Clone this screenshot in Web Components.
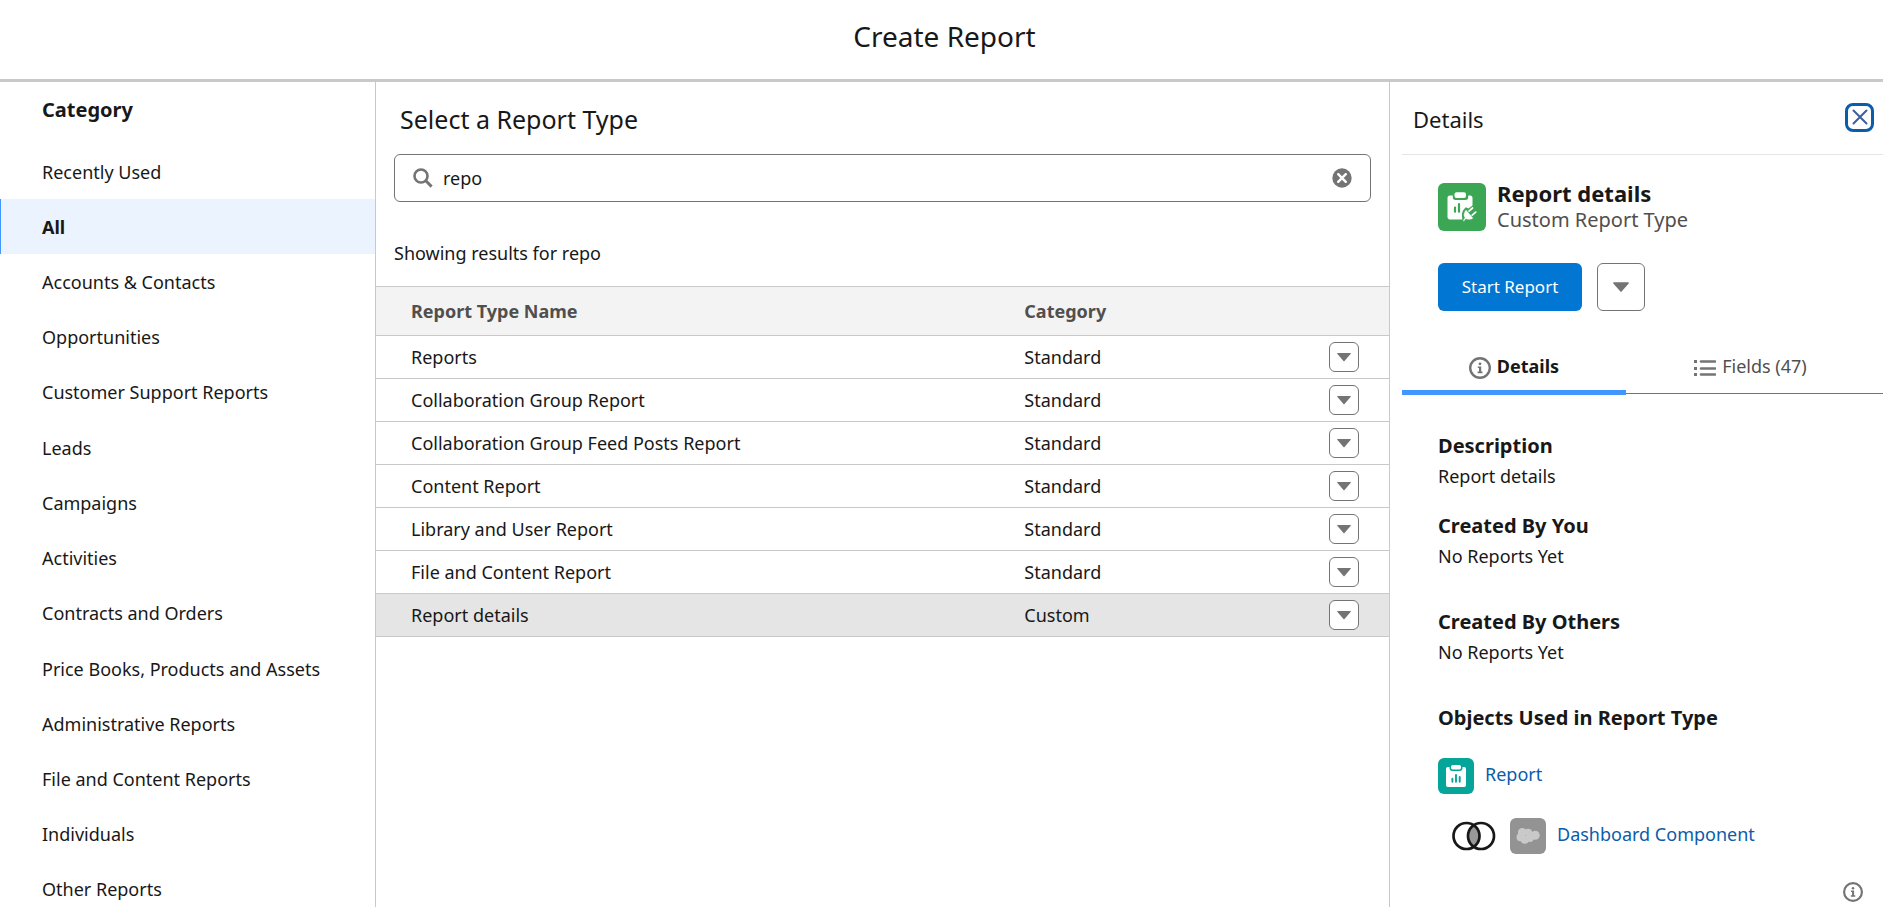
<!DOCTYPE html>
<html lang="en">
<head>
<meta charset="utf-8">
<meta name="viewport" content="width=device-width, initial-scale=1">
<title>Create Report</title>
<style>
  html, body { height: 100%; margin: 0; }
  body {
    font: 18px/26px "Noto Sans", "Open Sans", sans-serif;
    color: #181818;
    background: #fff;
  }
</style>
</head>
<body>
<report-builder>
  <builder-header slot="header">Create Report</builder-header>
  <category-nav slot="nav"></category-nav>
  <report-picker slot="main"></report-picker>
  <details-panel slot="details"></details-panel>
</report-builder>

<script>
const define = (name, html, setup) => {
  const template = document.createElement('template');
  template.innerHTML = html;
  customElements.define(name, class extends HTMLElement {
    constructor() {
      super();
      this.attachShadow({ mode: 'open' }).append(template.content.cloneNode(true));
    }
    connectedCallback() { if (setup) setup(this, this.shadowRoot); }
  });
};

/* Icons */
const ICONS = {
  search: ['0 0 20 20', '<g fill="none" stroke="currentColor"><circle cx="8" cy="8" r="6.5" stroke-width="2.6"/><path d="M12.8 12.8 18.6 18.6" stroke-width="3"/></g>'],
  clear: ['0 0 20 20', '<circle cx="10" cy="10" r="9.7" fill="currentColor"/><path d="M6.2 6.2 13.8 13.8M13.8 6.2 6.2 13.8" stroke="#fff" stroke-width="2.4" stroke-linecap="round"/>'],
  down: ['0 0 16 10', '<path d="M.8.3h14.4c.7 0 .9.7.5 1.100L8.600 9.600c-.3.4-.9.4-1.200 0L.3 1.400C-.1 1 .1.3.8.3z" fill="currentColor"/>'],
  close: ['0 0 16 16', '<path d="M1.5 1.5 14.5 14.5M14.5 1.5 1.5 14.5" stroke="currentColor" stroke-width="2" stroke-linecap="round"/>'],
  info: ['0 0 22 22', '<circle cx="11" cy="11" r="9.8" fill="none" stroke="currentColor" stroke-width="2.4"/><circle cx="11" cy="6.8" r="1.4" fill="currentColor"/><path d="M8.8 9.400h3.400v5.100h1.300v1.700H8.600v-1.700h1.400v-3.400H8.800z" fill="currentColor"/>'],
  list: ['0 0 22 18', '<path d="M0 1h3v3H0zM0 8h3v3H0zM0 14h3v3H0z" fill="currentColor"/><path d="M7 2.5H21M7 9.5H21M7 15.5H21" stroke="currentColor" stroke-width="2.6" stroke-linecap="round"/>'],
  customReport: ['0 0 48 48', '<rect width="48" height="48" rx="6" fill="#3ba755"/><path d="M12 12.5h2.8v1.8a2.7 2.7 0 0 0 2.7 2.7h10a2.7 2.7 0 0 0 2.7-2.7v-1.8H32a2.5 2.5 0 0 1 2.5 2.5v7.500l-4 3-2.700-1.200c-4 4-4.500 7-3.300 12.200H12A2.500 2.500 0 0 1 9.500 33.500V15a2.500 2.500 0 0 1 2.500-2.500z" fill="#fff"/><rect x="16.500" y="9.300" width="11.500" height="5.700" rx="2" fill="#fff"/><path d="M17 24.500v4.200M21 21.200v7.500" stroke="#3ba755" stroke-width="2.200" stroke-linecap="round"/><path d="M28 26.500 35.500 35.200c-2.500 1.800-5.500 2.200-7.500.8l-1.600 2c-.7.800-2-.2-1.300-1.100l1.400-2c-1.600-2.500-.8-6 1.500-8.400z" fill="#fff" stroke="#3ba755" stroke-width=".6"/><path d="M31 28.200 34.600 25M34.200 32.200 37.700 29.100" stroke="#fff" stroke-width="1.700" stroke-linecap="round"/>'],
  report: ['0 0 36 36', '<rect width="36" height="36" rx="6" fill="#06a59a"/><path d="M9.8 9h1.7v1a3 3 0 0 0 3 3h7a3 3 0 0 0 3-3V9h1.7A1.8 1.8 0 0 1 28 10.8v16.4a1.8 1.8 0 0 1-1.8 1.8H9.8A1.8 1.8 0 0 1 8 27.200V10.800A1.800 1.800 0 0 1 9.800 9z" fill="#fff"/><rect x="13" y="7" width="10" height="4.500" rx="1.700" fill="#fff"/><path d="M14.400 20.700v3M18 17v6.700M21.700 18.900v4.800" stroke="#06a59a" stroke-width="1.900" stroke-linecap="round"/>'],
  join: ['0 0 44 30', '<path d="M21.75 4.2a13 13 0 0 1 0 21.6a13 13 0 0 1 0-21.6z" fill="#999"/><g fill="none" stroke="#181818" stroke-width="2.7"><circle cx="14.5" cy="15" r="13"/><circle cx="29" cy="15" r="13"/></g>'],
  cloud: ['0 0 36 36', '<rect width="36" height="36" rx="6" fill="#939393"/><g fill="#c9c9c9"><circle cx="12.3" cy="14.4" r="4.4"/><circle cx="18.3" cy="14.6" r="3.8"/><circle cx="25.2" cy="17.2" r="4.5"/><circle cx="10.5" cy="19.2" r="4"/><circle cx="14.7" cy="21.8" r="4"/><circle cx="19.8" cy="20" r="3.9"/></g>']
};

class UiIcon extends HTMLElement {
  connectedCallback() {
    const [box, body] = ICONS[this.getAttribute('name')];
    const root = this.shadowRoot || this.attachShadow({ mode: 'open' });
    root.innerHTML = `<style>:host{display:block;flex:none;color:#747474}svg{display:block;width:100%;height:100%}</style>
      <svg viewBox="${box}" aria-hidden="true">${body}</svg>`;
  }
}
customElements.define('ui-icon', UiIcon);

/* Square button that opens a menu */
define('menu-button', `
<style>
  :host { display: inline-block; width: 48px; height: 48px; --arrow: 16px; }
  :host([small]) { width: 30px; height: 30px; --arrow: 14px; }
  button {
    box-sizing: border-box; display: flex; align-items: center; justify-content: center;
    width: 100%; height: 100%; padding: 0;
    border: 1px solid #747474; border-radius: 6px; background: #fff; cursor: pointer;
  }
  ui-icon { width: var(--arrow); height: 10px; }
</style>
<button type="button" aria-haspopup="true"><ui-icon name="down"></ui-icon></button>`,
(el, root) => root.querySelector('button').setAttribute('aria-label', el.getAttribute('label') || 'More actions'));

define('builder-header', `
<style>
  :host { display: block; border-bottom: 3px solid #c9c9c9; padding: 0 0 6px 6px; }
  h1 { margin: 0; font-size: 28px; line-height: 73px; font-weight: 400; text-align: center; }
</style>
<h1><slot></slot></h1>`);

define('category-nav', `
<style>
  :host { display: block; border-right: 1px solid #c9c9c9; }
  h2 { margin: 0 0 6px; padding-left: 42px; font-size: 20px; line-height: 56px; font-weight: 700; }
  ul { display: grid; grid-auto-rows: 1fr; min-height: 773px; margin: 0; padding: 0; list-style: none; }
  li { display: grid; }
  a {
    display: flex; align-items: center; padding-left: 41px;
    border-left: 1px solid transparent; color: inherit; text-decoration: none;
  }
  a[aria-current] { background: #ebf4fe; border-left-color: #4297fe; font-weight: 700; }
</style>
<h2 id="title">Category</h2>
<nav aria-labelledby="title"><ul></ul></nav>`,
(el, root) => {
  const names = ['Recently Used', 'All', 'Accounts &amp; Contacts', 'Opportunities', 'Customer Support Reports',
    'Leads', 'Campaigns', 'Activities', 'Contracts and Orders', 'Price Books, Products and Assets',
    'Administrative Reports', 'File and Content Reports', 'Individuals', 'Other Reports'];
  root.querySelector('ul').innerHTML = names.map(n =>
    `<li><a href="#"${n === 'All' ? ' aria-current="true"' : ''}>${n}</a></li>`).join('');
});

define('search-field', `
<style>
  :host {
    box-sizing: border-box; display: flex; align-items: center; height: 48px; padding: 0 18px;
    border: 1px solid #747474; border-radius: 6px;
  }
  label { flex: none; }
  ui-icon { width: 20px; height: 20px; }
  input {
    flex: 1; min-width: 0; padding: 0 10px; border: 0; outline: 0; background: none;
    font: inherit; color: inherit;
  }
  button { flex: none; padding: 0; border: 0; background: none; cursor: pointer; }
</style>
<label for="q" aria-label="Search report types"><ui-icon name="search"></ui-icon></label>
<input id="q" type="text" value="repo">
<button type="button" aria-label="Clear search"><ui-icon name="clear"></ui-icon></button>`);

define('report-table', `
<style>
  :host { display: block; }
  table { width: 100%; table-layout: fixed; border-collapse: separate; border-spacing: 0; }
  th, td { box-sizing: border-box; padding: 0; text-align: left; border-bottom: 1px solid #c9c9c9; }
  th {
    height: 50px; border-top: 1px solid #c9c9c9; background: #f3f3f3;
    color: #514f4d; font-weight: 700;
  }
  td { height: 43px; }
  th:first-child, td:first-child { width: 64%; padding-left: 35px; }
  th:last-child, td:last-child { width: 90px; padding-right: 30px; text-align: right; }
  menu-button { vertical-align: middle; }
  tr[aria-selected] td { background: #e5e5e5; }
</style>
<table>
  <thead><tr><th scope="col">Report Type Name</th><th scope="col">Category</th><th></th></tr></thead>
  <tbody></tbody>
</table>`,
(el, root) => {
  const rows = [['Reports', 'Standard'], ['Collaboration Group Report', 'Standard'],
    ['Collaboration Group Feed Posts Report', 'Standard'], ['Content Report', 'Standard'],
    ['Library and User Report', 'Standard'], ['File and Content Report', 'Standard'], ['Report details', 'Custom']];
  root.querySelector('tbody').innerHTML = rows.map(([name, cat]) =>
    `<tr${cat === 'Custom' ? ' aria-selected="true"' : ''}><td>${name}</td><td>${cat}</td><td><menu-button small label="Actions for ${name}"></menu-button></td></tr>`).join('');
});

define('report-picker', `
<style>
  :host { display: block; }
  h2 { margin: 0; padding: 2px 24px 0; font-size: 25px; line-height: 70px; font-weight: 400; }
  search-field { margin: 0 18px; }
  p { margin: 0; padding: 38px 18px 20px; }
</style>
<h2>Select a Report Type</h2>
<search-field></search-field>
<p>Showing results for repo</p>
<report-table></report-table>`);

define('detail-section', `
<style>
  :host { display: block; }
  h3 { margin: 0; font-size: 20px; line-height: 30px; font-weight: 700; }
  div { line-height: 30px; }
</style>
<h3></h3><div><slot></slot></div>`,
(el, root) => { root.querySelector('h3').textContent = el.getAttribute('heading'); });

define('object-link', `
<style>
  :host { display: flex; align-items: flex-start; height: 36px; }
  ui-icon { width: 36px; height: 36px; margin-right: 11px; }
  a { color: #0b5cab; line-height: 32px; text-decoration: none; }
</style>
<slot name="join"></slot><ui-icon name="report"></ui-icon><a href="#"><slot></slot></a>`,
(el, root) => {
  const icon = document.createElement('ui-icon');
  icon.setAttribute('name', el.getAttribute('icon'));
  root.querySelector('ui-icon').replaceWith(icon);
});

define('details-panel', `
<style>
  :host { display: flex; flex-direction: column; border-left: 1px solid #c9c9c9; padding-left: 12px; }
  header {
    display: flex; align-items: center; justify-content: space-between;
    padding: 2px 9px 0 11px; border-bottom: 1px solid #e5e5e5;
  }
  h2 { margin: 0; font-size: 22px; line-height: 70px; font-weight: 400; }
  .close {
    box-sizing: border-box; display: flex; align-items: center; justify-content: center;
    width: 29px; height: 29px; margin-bottom: 4px; padding: 0;
    border: 3px solid #0b5cab; border-radius: 8px; background: #fff; cursor: pointer;
  }
  .close ui-icon { width: 16px; height: 16px; color: #3a5f9e; }
  .summary { display: flex; align-items: center; gap: 11px; padding: 25px 0 0 36px; }
  .summary ui-icon { width: 48px; height: 48px; }
  .summary h3 { margin: 0; font-size: 22px; line-height: 26px; font-weight: 700; }
  .summary p { margin: 0; font-size: 20px; line-height: 28px; color: #514f4d; }
  .actions { display: flex; gap: 15px; padding: 29px 0 30px 36px; }
  .start {
    width: 144px; height: 48px; padding: 0; border: 0; border-radius: 6px;
    background: #0176d3; color: #fff; font: inherit; font-size: 17px; cursor: pointer;
  }
  .tabs { display: grid; grid-template-columns: 224px 1fr; align-items: start; }
  .tabs button {
    display: flex; align-items: flex-end; justify-content: center; gap: 6px;
    padding: 12px 0 11px; border: 0; border-bottom: 5px solid #4297fe;
    background: none; color: inherit; font: inherit; font-weight: 700; cursor: pointer;
  }
  .tabs button + button {
    padding: 12px 8px 14px 0; border-bottom: 1px solid #747474; color: #514f4d; font-weight: 400;
  }
  .tabs ui-icon { width: 22px; height: 22px; }
  .body { display: flex; flex-direction: column; gap: 36px; padding: 36px 0 0 36px; }
  .pair { display: flex; flex-direction: column; gap: 20px; }
  .objects { display: flex; flex-direction: column; gap: 24px; padding-top: 25px; }
  .child { padding-left: 14px; }
  .child ui-icon { width: 44px; height: 30px; margin: 3px 14px 0 0; }
  .help {
    align-self: flex-end; margin: auto 20px 5px 0; padding: 0; border: 0; background: none; cursor: pointer;
  }
  .help ui-icon { width: 20px; height: 20px; }
</style>
<header>
  <h2>Details</h2>
  <button class="close" type="button" aria-label="Close details"><ui-icon name="close"></ui-icon></button>
</header>
<div class="summary">
  <ui-icon name="customReport"></ui-icon>
  <div><h3>Report details</h3><p>Custom Report Type</p></div>
</div>
<div class="actions">
  <button class="start" type="button">Start Report</button>
  <menu-button label="More report actions"></menu-button>
</div>
<div class="tabs" role="tablist">
  <button type="button" role="tab" aria-selected="true"><ui-icon name="info"></ui-icon><span>Details</span></button>
  <button type="button" role="tab" aria-selected="false"><ui-icon name="list"></ui-icon><span>Fields (47)</span></button>
</div>
<div class="body">
  <div class="pair">
    <detail-section heading="Description">Report details</detail-section>
    <detail-section heading="Created By You">No Reports Yet</detail-section>
  </div>
  <detail-section heading="Created By Others">No Reports Yet</detail-section>
  <detail-section heading="Objects Used in Report Type">
    <div class="objects">
      <object-link icon="report">Report</object-link>
      <object-link icon="cloud" class="child"><ui-icon slot="join" name="join"></ui-icon>Dashboard Component</object-link>
    </div>
  </detail-section>
</div>
<button class="help" type="button" aria-label="Help"><ui-icon name="info"></ui-icon></button>`);

define('report-builder', `
<style>
  :host { display: flex; flex-direction: column; height: 100vh; overflow: hidden; }
  .columns { flex: 1; min-height: 0; display: grid; grid-template: minmax(0, 1fr) / 376px minmax(0, 1fr) 494px; }
  ::slotted(:not([slot="header"])) { box-sizing: border-box; min-height: 0; overflow: auto; scrollbar-width: none; }
</style>
<slot name="header"></slot>
<div class="columns">
  <slot name="nav"></slot>
  <slot name="main"></slot>
  <slot name="details"></slot>
</div>`);
</script>
</body>
</html>
